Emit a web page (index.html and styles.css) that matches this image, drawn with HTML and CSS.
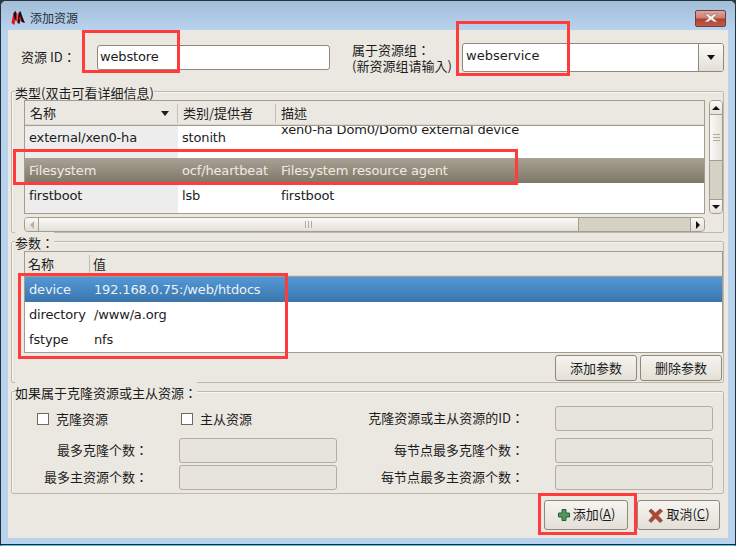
FILE: index.html
```html
<!DOCTYPE html>
<html>
<head>
<meta charset="utf-8">
<title>添加资源</title>
<link rel="stylesheet" href="styles.css">
</head>
<body>
<div class="window">
  <header class="titlebar">
    <svg class="app-icon" viewBox="0 0 14 16" width="14" height="16">
      <path d="M0.5 13 L2 5 L4 0.5 L6.5 4 L6.5 13 L4.5 9 L3.5 15 Z" fill="#e8101a"/>
      <path d="M2.5 3 L5 1.5 L5 11 L3.5 8 Z" fill="#111"/>
      <path d="M6.5 13 L7.5 3 L9.5 1 L11.5 7 L14 13 L10.5 12 L9.5 8 L8.5 14 Z" fill="#111"/>
      <path d="M7.5 9 L9.5 6 L10.5 11.5 Z" fill="#e8101a"/>
    </svg>
    <span class="title-text">添加资源</span>
    <button class="close-btn" type="button" aria-label="关闭">
      <svg viewBox="0 0 16 10" width="16" height="10"><path d="M1.5 1 H5 L8 3.2 L11 1 H14.5 L10.2 5 L14.5 9 H11 L8 6.8 L5 9 H1.5 L5.8 5 Z" fill="#f1f1f1" stroke="#8d6a66" stroke-width="0.6"/></svg>
    </button>
  </header>

  <main class="content">
    <section class="top-row">
      <label class="id-label">资源 ID：</label>
      <div class="textbox id-box">webstore</div>
      <label class="group-label">属于资源组：<br>(新资源组请输入)</label>
      <div class="combo">
        <div class="combo-text">webservice</div>
        <div class="combo-btn"><span class="arrow-down"></span></div>
      </div>
    </section>

    <fieldset class="frame frame-type">
      <legend>类型(双击可看详细信息)</legend>
      <div class="type-layout">
        <div class="type-main">
          <div class="list">
            <div class="list-head type-cols">
              <div class="th th-sort">名称<span class="sort-arrow"></span></div>
              <div class="th">类别/提供者</div>
              <div class="th th-last">描述</div>
            </div>
            <div class="type-body">
              <div class="row type-cols row-first">
                <div class="td td-sorted">external/xen0-ha</div>
                <div class="td">stonith</div>
                <div class="td td-clipped">xen0-ha Dom0/Dom0 external device</div>
              </div>
              <div class="row type-cols row-sel-gray">
                <div class="td">Filesystem</div>
                <div class="td">ocf/heartbeat</div>
                <div class="td td-desc">Filesystem resource agent</div>
              </div>
              <div class="row type-cols">
                <div class="td td-sorted">firstboot</div>
                <div class="td">lsb</div>
                <div class="td td-desc">firstboot</div>
              </div>
              <div class="row-fill type-cols"><div class="td-sorted"></div></div>
            </div>
          </div>
          <div class="hscroll">
            <div class="sb-btn sb-left"><span class="arrow-left"></span></div>
            <div class="h-thumb"><span class="grip-v"></span></div>
            <div class="h-trough"></div>
            <div class="sb-btn sb-right"><span class="arrow-right"></span></div>
          </div>
        </div>
        <div class="vscroll">
          <div class="vs-btn vs-up"><span class="arrow-up"></span></div>
          <div class="v-thumb"><span class="grip-h"></span></div>
          <div class="v-trough"></div>
          <div class="vs-btn vs-down"><span class="arrow-down small"></span></div>
        </div>
      </div>
    </fieldset>

    <fieldset class="frame frame-params">
      <legend>参数：</legend>
      <div class="list">
        <div class="list-head param-cols">
          <div class="th">名称</div>
          <div class="th th-last">值</div>
        </div>
        <div class="row param-cols row-sel-blue">
          <div class="td">device</div>
          <div class="td">192.168.0.75:/web/htdocs</div>
        </div>
        <div class="row param-cols">
          <div class="td">directory</div>
          <div class="td">/www/a.org</div>
        </div>
        <div class="row param-cols">
          <div class="td">fstype</div>
          <div class="td">nfs</div>
        </div>
      </div>
      <div class="param-actions">
        <button class="btn btn-small" type="button">添加参数</button>
        <button class="btn btn-small" type="button">删除参数</button>
      </div>
    </fieldset>

    <fieldset class="frame frame-clone">
      <legend>如果属于克隆资源或主从资源：</legend>
      <div class="clone-grid">
        <div class="checks">
          <span class="check"><span class="check-box"></span>克隆资源</span>
          <span class="check"><span class="check-box"></span>主从资源</span>
        </div>
        <div class="field-label">克隆资源或主从资源的ID：</div>
        <div class="field"></div>

        <div class="field-label">最多克隆个数：</div>
        <div class="field"></div>
        <div class="field-label">每节点最多克隆个数：</div>
        <div class="field"></div>

        <div class="field-label">最多主资源个数：</div>
        <div class="field"></div>
        <div class="field-label">每节点最多主资源个数：</div>
        <div class="field"></div>
      </div>
    </fieldset>

    <footer class="actions">
      <button class="btn btn-large" type="button">
        <svg viewBox="0 0 14 14" width="14" height="14"><path d="M5 1.5 H9 V5 H12.5 V9 H9 V12.5 H5 V9 H1.5 V5 H5 Z" fill="#4f9a5a" stroke="#2f5b38" stroke-width="1"/></svg>
        <span class="btn-text">添加(<u>A</u>)</span>
      </button>
      <button class="btn btn-large" type="button">
        <svg viewBox="0 0 17 17" width="17" height="17"><path d="M2 4 L4 2 L8.5 6 L13 2 L15.5 4 L11 8.5 L15.5 13.5 L13 15.5 L8.5 11 L4 15.5 L2 13.5 L6 8.5 Z" fill="#b8432f" stroke="#6f5a52" stroke-width="0.9"/></svg>
        <span class="btn-text">取消(<u>C</u>)</span>
      </button>
    </footer>
  </main>

  <div class="mark mark-id"></div>
  <div class="mark mark-group"></div>
  <div class="mark mark-type"></div>
  <div class="mark mark-params"></div>
  <div class="mark mark-add"></div>
</div>
</body>
</html>
```

FILE: styles.css
```css
* { box-sizing: border-box; }

html, body {
  margin: 0;
  padding: 0;
  background: #2a3640;
}

body {
  font-family: "Noto Sans CJK TC", sans-serif;
  font-size: 13px;
  line-height: 16px;
  color: #1c1c1c;
}

.textbox, .combo-text, .td {
  font-family: "DejaVu Sans", sans-serif;
}

.window {
  position: relative;
  width: 736px;
  height: 546px;
  display: flex;
  flex-direction: column;
  background: #b9d3ef;
  border: 1px solid #24323c;
  border-bottom: 1px solid #4fc0e4;
  border-radius: 6px 6px 0 0;
  box-shadow: inset 0 -1px 0 #0d2d42;
  overflow: hidden;
}

/* Title bar */
.titlebar {
  flex: none;
  height: 29px;
  display: flex;
  align-items: center;
  padding: 5px 9px 0 10px;
  background: linear-gradient(#a2bdd8, #b9d3ef);
}

.app-icon { flex: none; }

.title-text {
  margin-left: 5px;
  font-size: 12px;
  color: #26303a;
}

.close-btn {
  margin-left: auto;
  width: 31px;
  height: 17px;
  padding: 0;
  display: flex;
  align-items: center;
  justify-content: center;
  border: 1px solid #6d3f44;
  border-radius: 2px;
  background: linear-gradient(#dca79f 0, #cf7d70 45%, #b2402c 55%, #c05a48 100%);
}

/* Main surface */
.content {
  flex: none;
  height: 508px;
  margin: 0 7px;
  padding: 0 4px 0 3px;
  background: #ebe8e1;
}

.top-row {
  height: 52px;
  padding: 13px 0 0 10px;
  display: flex;
  align-items: flex-start;
}

.id-label {
  width: 76px;
  margin-top: 6px;
  white-space: nowrap;
}

.textbox {
  width: 233px;
  height: 25px;
  margin-top: 2px;
  padding: 3px 0 0 2px;
  background: #fff;
  border: 1px solid #8f897a;
  border-radius: 3px;
  letter-spacing: -0.16px;
}

.group-label {
  width: 110px;
  margin: -1px 0 0 22px;
  white-space: nowrap;
}

.combo {
  width: 262px;
  height: 29px;
  display: flex;
  background: #fff;
  border: 1px solid #8f897a;
  border-radius: 3px;
  overflow: hidden;
}

.combo-text {
  flex: 1;
  padding: 4px 0 0 3px;
}

.combo-btn {
  width: 25px;
  display: flex;
  align-items: center;
  justify-content: center;
  border-left: 1px solid #8f897a;
  background: linear-gradient(#fbfaf8, #e3dfd7);
}

/* Arrows */
.arrow-down, .arrow-up, .arrow-left, .arrow-right {
  display: block;
  width: 0;
  height: 0;
  border-style: solid;
  border-color: transparent;
}

.arrow-down { border-width: 5px 4.5px 0; border-top-color: #111; }
.arrow-down.small { border-width: 4px 4px 0; }
.arrow-up { border-width: 0 4px 4px; border-bottom-color: #111; }
.arrow-left { border-width: 4px 4px 4px 0; border-right-color: #b5b1a7; }
.arrow-right { border-width: 4px 0 4px 4px; border-left-color: #111; }

/* Frames */
.frame {
  margin: 0;
  min-width: 0;
  padding: 0 0 0 12px;
  border: 1px solid #bdb9af;
  border-radius: 2px;
  box-shadow: inset 1px 1px 0 #f7f5f1;
}

.frame legend {
  margin-left: -9px;
  padding: 4px 0 0;
  font-size: 13px;
  line-height: 14px;
  background: #ebe8e1;
}

.frame-type { height: 151px; }
.frame-params { margin-top: -1px; height: 151px; }
.frame-clone { margin-top: -1px; height: 112px; padding-top: 6px; padding-left: 0; }
.frame-clone legend { margin-left: 3px; }

/* Lists */
.type-layout {
  display: flex;
  gap: 4px;
}

.type-main { width: 682px; }

.list {
  background: #fff;
  border: 1px solid #a39d8f;
  border-top: 0;
  overflow: hidden;
}

.type-main .list { height: 114px; }

.frame-params .list {
  width: 699px;
  height: 102px;
  margin-top: 1px;
}

.type-cols {
  display: grid;
  grid-template-columns: 153px 98px 1fr;
}

.param-cols {
  display: grid;
  grid-template-columns: 65px 1fr;
}

.list-head {
  height: 26px;
  background: #ebe8e1;
  border-top: 1px solid #a39d8f;
  border-bottom: 1px solid #a39d8f;
  box-shadow: inset 0 -1px 0 #dcd8cf;
}

.th {
  display: flex;
  align-items: center;
  justify-content: space-between;
  height: 19px;
  margin-top: 3px;
  padding: 0 0 2px 5px;
  border-right: 1px solid #c3bfb5;
}

.param-cols .th { padding-left: 3px; }
.th-sort { padding-right: 8px; }
.th-last { border-right: 0; }

.sort-arrow {
  width: 0;
  height: 0;
  margin-top: 2px;
  border-style: solid;
  border-width: 5px 4.5px 0;
  border-color: #1c1c1c transparent transparent;
}

.row {
  height: 25px;
  align-items: center;
}

.row-first {
  height: 32px;
  align-items: start;
  overflow: hidden;
}

.type-body { height: 87px; overflow: hidden; }

.td {
  height: 100%;
  padding: 5px 0 0 4px;
  white-space: nowrap;
  letter-spacing: -0.16px;
}

.td-sorted { background: #ededed; }
.td-desc { padding-left: 5px; }

.row-first .td { padding-top: 4px; }
.row-first .td-clipped {
  height: auto;
  padding-top: 0;
  padding-left: 5px;
  margin-top: -4px;
}

.row-fill { height: 5px; }
.row-sel-gray { background: linear-gradient(#a9a193, #7e7666); color: #efebe3; }
.row-sel-blue { background: linear-gradient(#5398d6, #3a76ac); color: #eaf1f8; }

/* Scrollbars */
.hscroll {
  display: flex;
  height: 15px;
  margin-top: 3px;
  border: 1px solid #a39d8f;
  border-radius: 4px;
  overflow: hidden;
  background: #d6d1c5;
}

.sb-btn {
  flex: none;
  width: 14px;
  display: flex;
  align-items: center;
  justify-content: center;
  background: linear-gradient(#f9f8f5, #e2ded5);
}

.sb-left { border-right: 1px solid #a39d8f; }
.sb-right { border-left: 1px solid #a39d8f; }

.h-thumb {
  flex: none;
  width: 540px;
  display: flex;
  align-items: center;
  justify-content: center;
  background: linear-gradient(#fbfaf8, #e4e0d8);
  border-right: 1px solid #a39d8f;
}

.grip-v {
  width: 7px;
  height: 7px;
  background: repeating-linear-gradient(90deg, #b0ab9e 0 1px, transparent 1px 3px);
}

.h-trough { flex: 1; }

.vscroll {
  flex: none;
  width: 14px;
  height: 114px;
  display: flex;
  flex-direction: column;
  background: #d6d1c5;
  border: 1px solid #a39d8f;
  border-radius: 4px;
  overflow: hidden;
}

.vs-btn {
  flex: none;
  height: 14px;
  display: flex;
  align-items: center;
  justify-content: center;
  background: linear-gradient(#fbfaf8, #e6e2da);
}

.vs-up { border-bottom: 1px solid #a39d8f; }
.vs-down { border-top: 1px solid #a39d8f; }

.v-thumb {
  flex: none;
  height: 46px;
  display: flex;
  align-items: center;
  justify-content: center;
  background: linear-gradient(90deg, #fbfaf8, #e6e2da);
  border-bottom: 1px solid #a39d8f;
}

.grip-h {
  width: 7px;
  height: 7px;
  background: repeating-linear-gradient(0deg, #b0ab9e 0 1px, transparent 1px 3px);
}

.v-trough { flex: 1; }

/* Buttons */
.btn {
  display: flex;
  align-items: center;
  justify-content: center;
  padding: 0;
  font: inherit;
  color: #1c1c1c;
  background: linear-gradient(#f6f4f0, #e4e0d8);
  border: 1px solid #8f897a;
  border-radius: 3px;
}

.btn-text { margin-bottom: 3px; }

.param-actions {
  display: flex;
  justify-content: flex-end;
  gap: 3px;
  width: 698px;
  margin-top: 2px;
}

.btn-small { width: 82px; height: 26px; padding-bottom: 1px; }

.actions {
  display: flex;
  justify-content: flex-end;
  gap: 9px;
  padding: 6px 4px 0 0;
}

.btn-large { width: 84px; height: 30px; gap: 2px; }
.btn-large + .btn-large { width: 83px; gap: 2px; }

/* Clone section */
.clone-grid {
  display: grid;
  grid-template-columns: 167px 158px 218px 158px;
  grid-template-rows: 32px 27px 25px;
}

.checks {
  grid-column: span 2;
  height: 25px;
  display: flex;
  align-items: center;
  padding-left: 25px;
}

.check {
  display: flex;
  align-items: center;
  width: 144px;
  gap: 7px;
}

.check-box {
  width: 12px;
  height: 12px;
  background: #fff;
  border: 1px solid #6f6a5c;
}

.field-label {
  height: 25px;
  display: flex;
  align-items: center;
  justify-content: flex-end;
  padding: 0 31px 2px 0;
  white-space: nowrap;
}

.field {
  height: 25px;
  background: #e7e4dd;
  border: 1px solid #b5ae9f;
  border-radius: 3px;
}

/* Red annotation boxes drawn over the screenshot */
.mark {
  position: absolute;
  border: 3px solid #ff3b3b;
  pointer-events: none;
}

.mark-id { left: 81px; top: 29px; width: 98px; height: 43px; }
.mark-group { left: 455px; top: 20px; width: 114px; height: 55px; }
.mark-type { left: 12px; top: 148px; width: 505px; height: 36px; }
.mark-params { left: 17px; top: 272px; width: 270px; height: 86px; }
.mark-add { left: 537px; top: 492px; width: 99px; height: 42px; }
```
